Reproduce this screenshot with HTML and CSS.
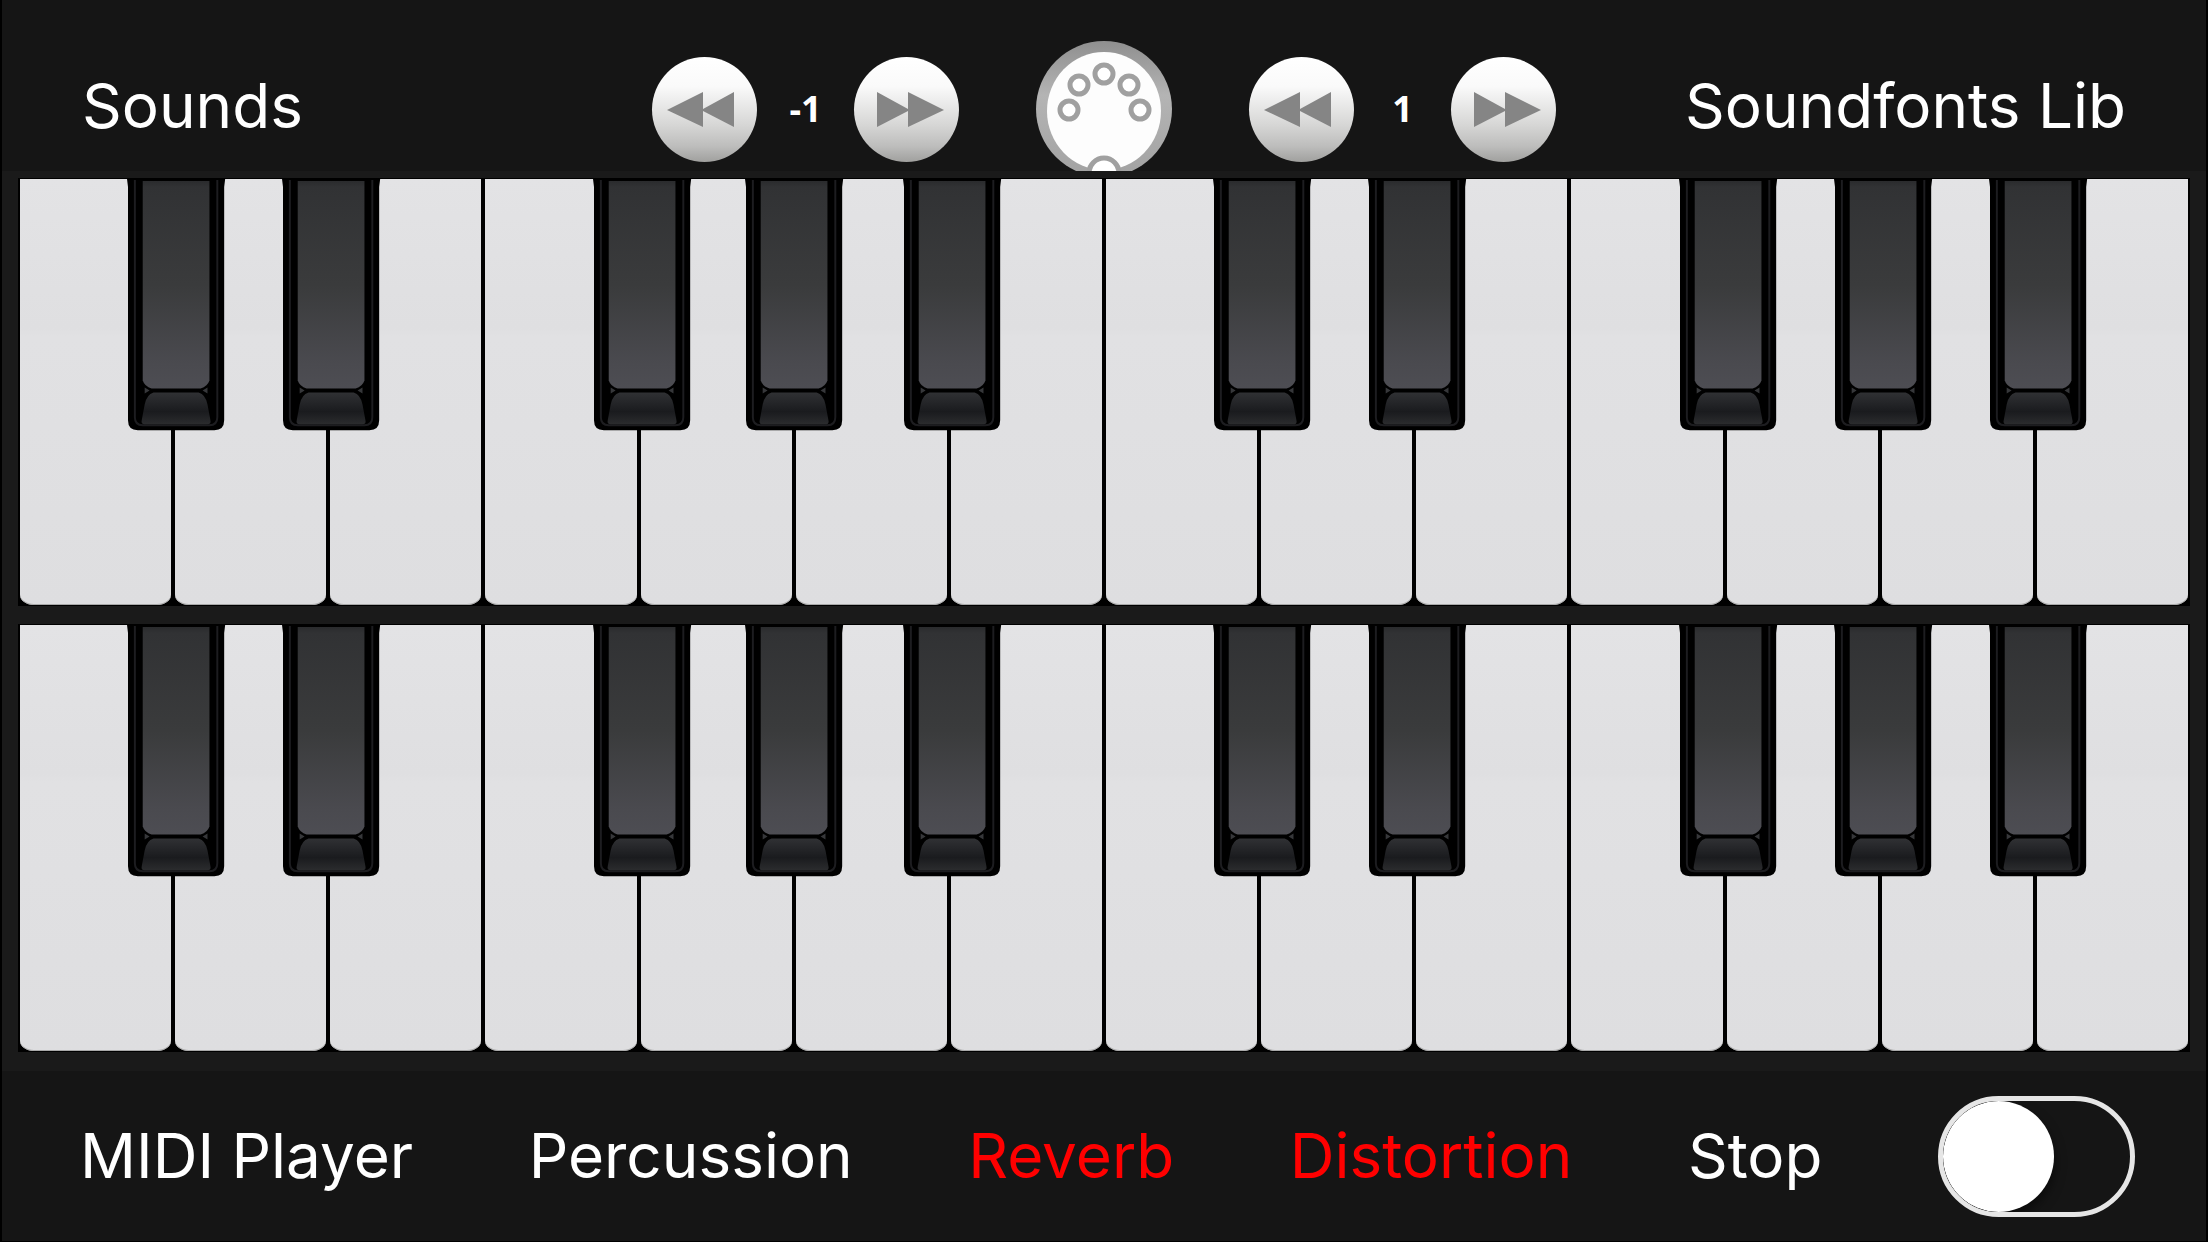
FILE: index.html
```
<!DOCTYPE html>
<html lang="en">
<head>
<meta charset="utf-8">
<meta name="viewport" content="width=device-width, initial-scale=1">
<title>Piano</title>
<link rel="stylesheet" href="styles.css">
</head>
<body>
<svg class="defs" aria-hidden="true">
  <defs>
    <linearGradient id="face" x1="0" y1="0" x2="0" y2="1">
      <stop offset="0" stop-color="#2a2b2d"/>
      <stop offset="0.03" stop-color="#313234"/>
      <stop offset="0.5" stop-color="#3a3b3c"/>
      <stop offset="0.88" stop-color="#4a4a4f"/>
      <stop offset="1" stop-color="#4d4d53"/>
    </linearGradient>
    <linearGradient id="lip" x1="0" y1="0" x2="0" y2="1">
      <stop offset="0" stop-color="#303134"/>
      <stop offset="0.6" stop-color="#1a1b1e"/>
      <stop offset="1" stop-color="#2b2c2e"/>
    </linearGradient>
    <linearGradient id="ring" x1="0" y1="0" x2="0" y2="1">
      <stop offset="0" stop-color="#8f8f8f"/>
      <stop offset="0.4" stop-color="#b4b4b4"/>
      <stop offset="1" stop-color="#a2a2a2"/>
    </linearGradient>
    <symbol id="black-key" viewBox="0 0 98 252" preserveAspectRatio="none" overflow="visible">
      <path fill="#000" d="M-1 0H99L98 8V242Q98 252 88 252H10Q0 252 0 242V8Z"/>
      <path fill="none" stroke="#1d1d20" stroke-width="2" d="M7 1V239Q7 247 15 247H83Q91 247 91 239V1"/>
      <path fill="url(#face)" d="M15 2H83V202Q81 208 74 210H24Q17 208 15 202Z"/>
      <path fill="#36373a" d="M17 209L22 212L17 215ZM81 209L76 212L81 215Z"/>
      <path fill="url(#lip)" d="M26 214H72Q79 216 81 226L84 242Q85 246 81 246H17Q13 246 14 242L17 226Q19 216 26 214Z"/>
    </symbol>
    <symbol id="rewind" viewBox="0 0 105 105">
      <path fill="#858585" d="M15 53L51 35V52L82 35V70L51 54V70Z"/>
    </symbol>
    <symbol id="forward" viewBox="0 0 105 105">
      <path fill="#858585" d="M90 53L54 35V52L23 35V70L54 54V70Z"/>
    </symbol>
  </defs>
</svg>

<header class="bar bar-top">
  <button class="text-button">Sounds</button>
  <div class="transport">
    <button class="round" aria-label="Previous octave, upper"><svg><use href="#rewind"/></svg></button>
    <output class="value">-1</output>
    <button class="round" aria-label="Next octave, upper"><svg><use href="#forward"/></svg></button>
    <button class="midi" aria-label="MIDI">
      <svg viewBox="0 0 136 136">
        <circle cx="68" cy="68" r="68" fill="url(#ring)"/>
        <ellipse cx="68" cy="70" rx="57" ry="59" fill="#fdfdfd"/>
        <g fill="#fff" stroke="#a0a0a0" stroke-width="5">
          <circle cx="33" cy="69" r="9"/>
          <circle cx="43" cy="44" r="9"/>
          <circle cx="68" cy="33" r="9"/>
          <circle cx="93" cy="44" r="9"/>
          <circle cx="104" cy="69" r="9"/>
          <circle cx="68" cy="132" r="15"/>
        </g>
      </svg>
    </button>
    <button class="round" aria-label="Previous octave, lower"><svg><use href="#rewind"/></svg></button>
    <output class="value">1</output>
    <button class="round" aria-label="Next octave, lower"><svg><use href="#forward"/></svg></button>
  </div>
  <button class="text-button end">Soundfonts Lib</button>
</header>

<main class="keyboards">
  <div class="keyboard"></div>
  <div class="keyboard"></div>
</main>

<footer class="bar bar-bottom">
  <button class="text-button">MIDI Player</button>
  <button class="text-button">Percussion</button>
  <button class="text-button active">Reverb</button>
  <button class="text-button active">Distortion</button>
  <button class="text-button">Stop</button>
  <input class="switch" type="checkbox" role="switch" aria-label="Play">
</footer>
<script src="keys.js"></script>
</body>
</html>
```
FILE: keys.js
```
// Two octaves of white keys; the flag says whether a sharp sits on the key's right edge.
const notes = [
  ["C", true], ["D", true], ["E", false], ["F", true], ["G", true], ["A", true], ["B", false]
];

document.querySelectorAll(".keyboard").forEach((keyboard) => {
  for (let octave = 0; octave < 2; octave++) {
    for (const [note, hasSharp] of notes) {
      const cell = document.createElement("div");
      cell.className = "cell";
      const centered = octave === 0 && note === "G" ? " centered" : "";
      cell.innerHTML = `<button class="white" aria-label="${note}"></button>` +
        (hasSharp
          ? `<button class="black${centered}" aria-label="${note} sharp"><svg><use href="#black-key"/></svg></button>`
          : "");
      keyboard.append(cell);
    }
  }
});
```
FILE: styles.css
```
* {
  box-sizing: border-box;
}

body {
  margin: 0;
  min-height: 100vh;
  display: flex;
  flex-direction: column;
  background: #1a1a1a;
  border: solid #000;
  border-width: 0 2px 1px;
  color: #fff;
  font-family: Inter, "Liberation Sans", sans-serif;
}

button {
  margin: 0;
  padding: 0;
  border: 0;
  background: none;
  color: inherit;
  font: inherit;
  cursor: pointer;
}

svg {
  display: block;
  width: 100%;
  height: 100%;
}

.defs {
  position: absolute;
  width: 0;
  height: 0;
}

.bar {
  flex: none;
  background: #151515;
  align-items: center;
}

.bar-top {
  display: grid;
  grid-template-columns: 1fr auto 1fr;
  height: 171px;
  padding: 41px 80px 0;
  overflow: hidden;
}

.bar-bottom {
  display: flex;
  justify-content: space-between;
  height: 170px;
  padding: 0 71px 0 78px;
}

.text-button {
  justify-self: start;
  font-size: 62px;
  line-height: 80px;
  white-space: nowrap;
}

.bar-top .text-button {
  padding-bottom: 6px;
}

.bar-top .end {
  justify-self: end;
}

.active {
  color: #f00;
}

.transport {
  display: flex;
  align-items: center;
}

.round {
  width: 105px;
  height: 105px;
  border-radius: 50%;
  background: linear-gradient(#fff, #fafafa 28%, #d6d6d5 65%, #bdbdbc 85%, #a0a09e);
}

.value {
  width: 97px;
  text-align: center;
  font: bold 36px/48px "Open Sans", "Noto Sans", sans-serif;
}

.midi {
  width: 136px;
  height: 136px;
  margin: 0 77px;
}

.keyboards {
  flex: 1;
  display: flex;
  flex-direction: column;
  gap: 18px;
  padding: 7px 16px 19px;
}

.keyboard {
  flex: 1;
  display: flex;
  min-height: 240px;
  padding: 1px 0;
  background: #000;
}

.cell {
  flex: 1;
  display: flex;
  position: relative;
  padding: 0 2px;
}

.white {
  flex: 1;
  border-radius: 0 0 14px 14px / 0 0 10px 10px;
  background: linear-gradient(#e3e3e5, #dfdfe1 35%, #e1e1e3 37%, #dedee0);
  box-shadow: inset 0 -1px #a8a8a8;
}

/* Sharps lie over the edge between two white keys. */
.black {
  position: absolute;
  z-index: 1;
  top: 0;
  left: 71%;
  width: 62%;
  height: 59%;
}

.centered {
  left: 69%;
}

.black svg {
  overflow: visible;
}

.switch {
  appearance: none;
  width: 197px;
  height: 121px;
  margin: 0;
  border: 5px solid #e6e6e6;
  border-radius: 61px;
  overflow: hidden;
  cursor: pointer;
}

.switch::before {
  content: "";
  display: block;
  width: 111px;
  height: 111px;
  border-radius: 50%;
  background: #fff;
  box-shadow: 0 6px 12px #0008;
}

.switch:checked::before {
  margin-left: auto;
}
```
